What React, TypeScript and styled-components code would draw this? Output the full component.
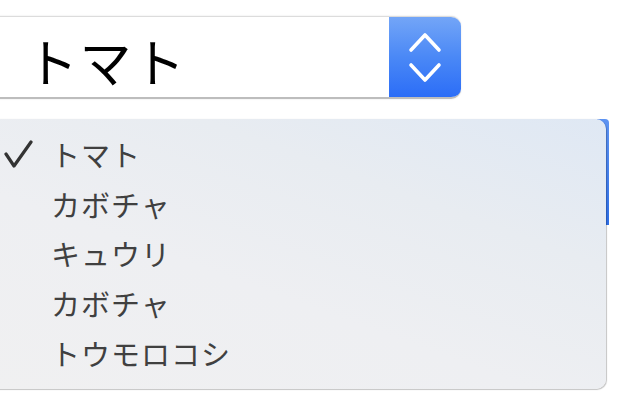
import React from "react";
import styled, { createGlobalStyle } from "styled-components";

const Global = createGlobalStyle`
  html, body { margin: 0; padding: 0; background: #ffffff; }
  body { font-family: "Noto Sans CJK JP", "Noto Sans", sans-serif; overflow: hidden; }
`;

const Page = styled.div`
  width: 626px;
  height: 406px;
  padding-top: 16px;
  box-sizing: border-box;
  display: flex;
  flex-direction: column;
  overflow: hidden;
`;

const SelectBox = styled.div`
  margin-left: -12px;
  width: 473px;
  height: 83px;
  display: flex;
  align-items: stretch;
  box-sizing: border-box;
  border-radius: 10px;
  background: #ffffff;
  border-top: 1px solid #dcdcdc;
  border-bottom: 2px solid #bdbdbd;
  box-shadow: 0 0 2px rgba(0, 0, 0, 0.12);
  overflow: hidden;
`;

const SelectValue = styled.div`
  flex: 1;
  display: flex;
  align-items: center;
  padding-left: 38px;
  padding-top: 8px;
  font-size: 52px;
  letter-spacing: 1.5px;
  color: #000;
  line-height: 1;
`;

const StepperButton = styled.div`
  width: 72px;
  margin-top: -1px;
  margin-bottom: -2px;
  display: flex;
  align-items: center;
  justify-content: center;
  background: linear-gradient(180deg, #74a6f7 0%, #4a88f6 50%, #2a6cf7 100%);
`;

const PopupLayer = styled.div`
  position: relative;
  margin-top: 20px;
  margin-left: -12px;
  width: 618px;
  height: 270px;
`;

const BackStrip = styled.div`
  position: absolute;
  right: -3px;
  top: 0;
  width: 12px;
  height: 106px;
  border-top-right-radius: 4px;
  background: linear-gradient(180deg, #5d93f2 0%, #2f6fe6 100%);
`;

const Popup = styled.div`
  position: relative;
  z-index: 1;
  width: 100%;
  height: 100%;
  box-sizing: border-box;
  padding: 11px 0;
  border-radius: 10px;
  background: linear-gradient(200deg, #dfe8f4 0%, #e8ecf1 30%, #eeeff2 60%, #f0f0f1 100%);
  box-shadow: 1px 1px 1px rgba(0, 0, 0, 0.22), 0 0 1px rgba(0, 0, 0, 0.15);
  display: flex;
  flex-direction: column;
`;

const Item = styled.div`
  height: 49.6px;
  display: flex;
  align-items: center;
  font-size: 29px;
  color: #404040;
  line-height: 1;
`;

const CheckCell = styled.div`
  width: 63px;
  height: 100%;
  display: flex;
  align-items: center;
  padding-left: 16px;
  box-sizing: border-box;
`;

const Label = styled.span`
  letter-spacing: 1px;
`;

const items = ["トマト", "カボチャ", "キュウリ", "カボチャ", "トウモロコシ"];

export default function App() {
  return (
    <>
      <Global />
      <Page>
        <SelectBox>
          <SelectValue>トマト</SelectValue>
          <StepperButton>
            <svg width="34" height="52" viewBox="0 0 34 52">
              <polyline points="3,18 17,3 31,18" fill="none" stroke="#fff" strokeWidth="3.6" strokeLinecap="round" strokeLinejoin="round" />
              <polyline points="3,33 17,48 31,33" fill="none" stroke="#fff" strokeWidth="3.6" strokeLinecap="round" strokeLinejoin="round" />
            </svg>
          </StepperButton>
        </SelectBox>
        <PopupLayer>
          <BackStrip />
          <Popup>
            {items.map((t, i) => (
              <Item key={i}>
                <CheckCell>
                  {i === 0 && (
                    <svg width="30" height="30" viewBox="0 0 30 30">
                      <polyline points="2,14 10,26 27,2" fill="none" stroke="#333" strokeWidth="3.2" strokeLinecap="round" strokeLinejoin="round" />
                    </svg>
                  )}
                </CheckCell>
                <Label>{t}</Label>
              </Item>
            ))}
          </Popup>
        </PopupLayer>
      </Page>
    </>
  );
}
